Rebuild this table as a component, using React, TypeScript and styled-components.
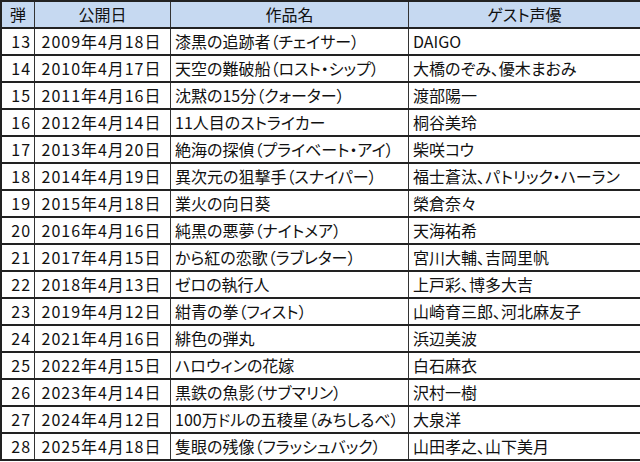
import styled, { createGlobalStyle } from 'styled-components';

const GlobalStyle = createGlobalStyle`
  html, body {
    margin: 0;
    padding: 0;
    background: #ffffff;
  }
  body {
    font-family: "Noto Sans CJK JP", "Noto Sans", sans-serif;
    color: #111;
  }
`;

interface Entry {
  no: number;
  date: string;
  title: string;
  guest: string;
}

const entries: Entry[] = [
  { no: 13, date: '2009年4月18日', title: '漆黒の追跡者（チェイサー）', guest: 'DAIGO' },
  { no: 14, date: '2010年4月17日', title: '天空の難破船（ロスト・シップ）', guest: '大橋のぞみ、優木まおみ' },
  { no: 15, date: '2011年4月16日', title: '沈黙の15分（クォーター）', guest: '渡部陽一' },
  { no: 16, date: '2012年4月14日', title: '11人目のストライカー', guest: '桐谷美玲' },
  { no: 17, date: '2013年4月20日', title: '絶海の探偵（プライベート・アイ）', guest: '柴咲コウ' },
  { no: 18, date: '2014年4月19日', title: '異次元の狙撃手（スナイパー）', guest: '福士蒼汰、パトリック・ハーラン' },
  { no: 19, date: '2015年4月18日', title: '業火の向日葵', guest: '榮倉奈々' },
  { no: 20, date: '2016年4月16日', title: '純黒の悪夢（ナイトメア）', guest: '天海祐希' },
  { no: 21, date: '2017年4月15日', title: 'から紅の恋歌（ラブレター）', guest: '宮川大輔、吉岡里帆' },
  { no: 22, date: '2018年4月13日', title: 'ゼロの執行人', guest: '上戸彩、博多大吉' },
  { no: 23, date: '2019年4月12日', title: '紺青の拳（フィスト）', guest: '山崎育三郎、河北麻友子' },
  { no: 24, date: '2021年4月16日', title: '緋色の弾丸', guest: '浜辺美波' },
  { no: 25, date: '2022年4月15日', title: 'ハロウィンの花嫁', guest: '白石麻衣' },
  { no: 26, date: '2023年4月14日', title: '黒鉄の魚影（サブマリン）', guest: '沢村一樹' },
  { no: 27, date: '2024年4月12日', title: '100万ドルの五稜星（みちしるべ）', guest: '大泉洋' },
  { no: 28, date: '2025年4月18日', title: '隻眼の残像（フラッシュバック）', guest: '山田孝之、山下美月' },
];

const Table = styled.table`
  border-collapse: collapse;
  width: 637px;
  table-layout: fixed;
  border: 2px solid #222;
  font-size: 16px;
  font-feature-settings: "palt";
`;

const HeadCell = styled.th<{ $w: number }>`
  width: ${({ $w }) => $w}px;
  height: 25px;
  padding: 0;
  background: #c6d9f1;
  font-weight: 400;
  text-align: center;
  border-left: 1px solid #333;
  border-bottom: 2px solid #222;
  line-height: 25px;
  white-space: nowrap;
`;

const Cell = styled.td<{ $align: 'left' | 'center' | 'right'; $wide?: boolean }>`
  height: 25px;
  padding: 0 ${({ $align }) => ($align === 'right' ? '3px' : '4px')} 0 ${({ $align }) => ($align === 'left' ? '4px' : '2px')};
  text-align: ${({ $align }) => $align};
  border-left: 1px solid #333;
  border-bottom: 2px solid #222;
  line-height: 25px;
  white-space: nowrap;
  overflow: hidden;
  letter-spacing: ${({ $wide }) => ($wide ? '0.06em' : '0')};
`;

export default function App() {
  return (
    <>
      <GlobalStyle />
      <Table>
        <thead>
          <tr>
            <HeadCell $w={32}>弾</HeadCell>
            <HeadCell $w={135}>公開日</HeadCell>
            <HeadCell $w={237}>作品名</HeadCell>
            <HeadCell $w={231}>ゲスト声優</HeadCell>
          </tr>
        </thead>
        <tbody>
          {entries.map((e) => (
            <tr key={e.no}>
              <Cell $align="right" $wide>{e.no}</Cell>
              <Cell $align="center" $wide>{e.date}</Cell>
              <Cell $align="left">{e.title}</Cell>
              <Cell $align="left">{e.guest}</Cell>
            </tr>
          ))}
        </tbody>
      </Table>
    </>
  );
}
